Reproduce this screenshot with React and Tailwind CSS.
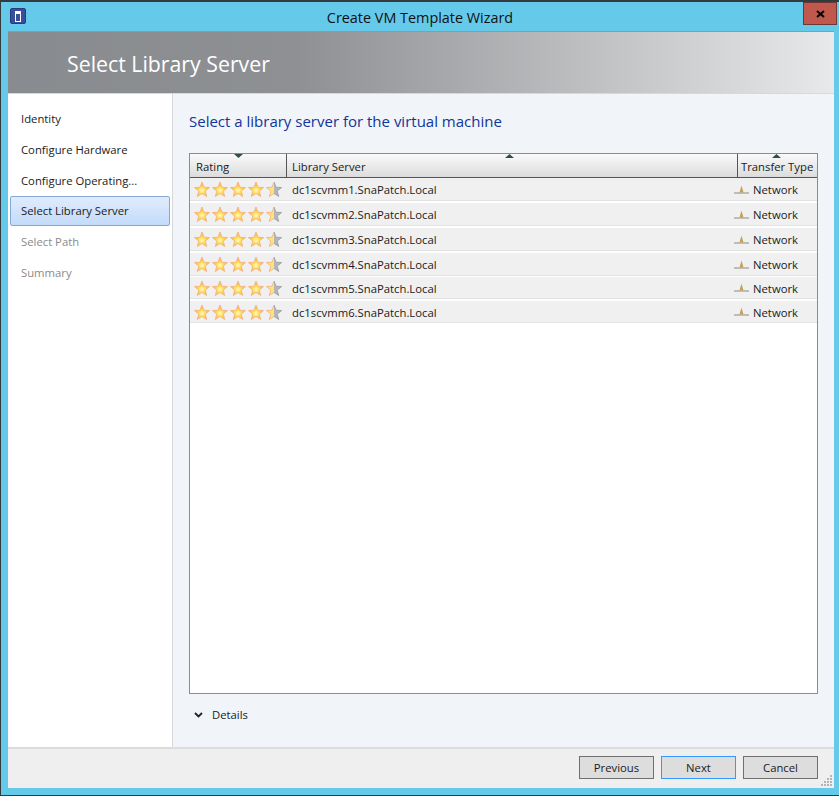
import React from "react";

const servers = [
  { name: "dc1scvmm1.SnaPatch.Local", row: "h-[23px] mb-[2px]" },
  { name: "dc1scvmm2.SnaPatch.Local", row: "h-[23px] mb-[2px]" },
  { name: "dc1scvmm3.SnaPatch.Local", row: "h-[23px] mb-[2px]" },
  { name: "dc1scvmm4.SnaPatch.Local", row: "h-[23px] mb-[1px]" },
  { name: "dc1scvmm5.SnaPatch.Local", row: "h-[22px] mb-[2px]" },
  { name: "dc1scvmm6.SnaPatch.Local", row: "h-[22px]" },
];

const Star = ({ half }) => (
  <svg width="18" height="17" viewBox="0 0 18 17" className="shrink-0">
    <defs>
      <radialGradient id="gold" cx="50%" cy="58%" r="50%">
        <stop offset="0%" stopColor="#fffbc8" />
        <stop offset="45%" stopColor="#ffdc50" />
        <stop offset="100%" stopColor="#fba92e" />
      </radialGradient>
      <linearGradient id="halfFill" x1="0" x2="1" y1="0" y2="0">
        <stop offset="50%" stopColor="#ffe27a" />
        <stop offset="50%" stopColor="#b4b6b9" />
      </linearGradient>
      <linearGradient id="halfLine" x1="0" x2="1" y1="0" y2="0">
        <stop offset="50%" stopColor="#f5b98a" />
        <stop offset="50%" stopColor="#a3a5a7" />
      </linearGradient>
    </defs>
    <path
      d="M9 1L11 6.25 16.6 6.53 12.23 10.05 13.7 15.47 9 12.4 4.3 15.47 5.77 10.05 1.4 6.53 7 6.25z"
      fill={half ? "url(#halfFill)" : "url(#gold)"}
      stroke={half ? "url(#halfLine)" : "#f5b98a"}
      strokeWidth="1"
      strokeLinejoin="round"
    />
  </svg>
);

const NetworkIcon = () => (
  <svg width="16" height="10" viewBox="0 0 16 10" className="shrink-0">
    <rect x="0" y="7" width="15" height="2" fill="#bdbdbd" />
    <path d="M7.5 0.5l2 7h-4z" fill="#c9a14c" />
  </svg>
);

const SortArrow = ({ down, className }) => (
  <svg width="9" height="4" viewBox="0 0 9 4" className={"absolute top-0 " + className}>
    <path d={down ? "M0 0h9L4.5 4z" : "M4.5 0L9 4H0z"} fill="#2f4f4f" />
  </svg>
);

const Row = ({ name, row }) => (
  <div className={"flex items-center bg-[#f0f0f0] border-b border-[#e3e3e3] pt-[1px] " + row}>
    <div className="flex w-[97px] shrink-0 pl-[3px]">
      <Star />
      <Star />
      <Star />
      <Star />
      <Star half />
    </div>
    <div className="mt-[2px] flex-1 pl-[5px] text-[#1a1a1a]">{name}</div>
    <div className="flex w-[83px] shrink-0 items-center gap-[3px] text-[#1a1a1a]">
      <NetworkIcon />
      <span className="mt-[2px]">Network</span>
    </div>
  </div>
);

const navItem = "flex h-[31px] items-center px-[11px]";

export default function App() {
  return (
    <div
      className="flex h-[796px] w-[839px] flex-col overflow-hidden border-t-2 border-b border-l border-[#333b40] bg-[#65c9ea] text-[11.3px]"
      style={{ fontFamily: '"Open Sans", "Noto Sans", sans-serif' }}
    >
      {/* Title bar */}
      <div className="relative flex h-[29px] shrink-0 items-start pl-[9px] pr-[2px]">
        <div className="mt-[6px] flex h-[16px] w-[16px] items-center justify-center rounded-[2px] border border-[#2a3a7c] bg-[#3a4f9c]">
          <div className="flex h-[11px] w-[6px] flex-col gap-[2px] border border-white">
            <div className="h-[2px] bg-white" />
          </div>
        </div>
        <div className="ml-[11px] flex-1 pt-[6px] text-center text-[14.4px] leading-[20px] text-[#111]">
          Create VM Template Wizard
        </div>
        <div className="flex h-[23px] w-[34px] items-center justify-center border border-[#6d3832] bg-[#c0584e]">
          <svg width="9" height="8" viewBox="0 0 9 8">
            <path d="M1 1l7 6M8 1L1 7" stroke="#000" strokeWidth="2" />
          </svg>
        </div>
      </div>

      <div className="ml-[7px] mr-[5px] flex h-[757px] flex-col bg-white">
        {/* Banner */}
        <div className="flex h-[62px] shrink-0 items-center border-t border-[#62a9c4] bg-gradient-to-r from-[#888b8f] via-[#8e9093] via-35% to-[#e8e9ea] pl-[59px] pt-[2px] text-[21.3px] text-white">
          Select Library Server
        </div>

        <div className="flex min-h-0 flex-1 border-t border-[#d6d8da]">
          {/* Steps */}
          <div className="flex w-[165px] shrink-0 flex-col border-r border-[#d6d8da] bg-white px-[2px] pt-[10px]">
            <div className={navItem + " text-[#1a1a1a]"}>Identity</div>
            <div className={navItem + " text-[#1a1a1a]"}>Configure Hardware</div>
            <div className={navItem + " text-[#1a1a1a]"}>Configure Operating...</div>
            <div className="-mt-[1px] flex h-[30px] items-center rounded-[2px] border border-[#84a9d6] bg-gradient-to-b from-[#e0ecfc] to-[#c3dbfb] px-[10px] pt-[1px] text-[#1a1a1a]">
              Select Library Server
            </div>
            <div className={navItem + " mt-[1px] text-[#8a8a8a]"}>Select Path</div>
            <div className={navItem + " text-[#8a8a8a]"}>Summary</div>
          </div>

          {/* Main panel */}
          <div className="flex min-w-0 flex-1 flex-col bg-[#f1f5f9] pl-[16px] pr-[16px]">
            <h1 className="pt-[16px] text-[15px] leading-[22px] text-[#12349a]">
              Select a library server for the virtual machine
            </h1>

            <div className="mt-[21px] flex h-[541px] flex-col border border-[#7292b2] bg-white">
              <div className="flex h-[24px] shrink-0 border-b border-[#555] bg-gradient-to-b from-[#fafafa] to-[#dcdcdc] text-[#1a1a1a]">
                <div className="relative flex w-[97px] shrink-0 items-end border-r border-[#555] pb-[1px] pl-[6px]">
                  Rating
                  <SortArrow down className="left-[44px]" />
                </div>
                <div className="relative flex flex-1 items-end border-r border-[#555] pb-[1px] pl-[5px]">
                  Library Server
                  <SortArrow className="left-[218px]" />
                </div>
                <div className="relative flex w-[79px] shrink-0 items-end pb-[1px] pl-[3px]">
                  Transfer Type
                  <SortArrow className="left-[34px]" />
                </div>
              </div>
              {servers.map((s) => (
                <Row key={s.name} name={s.name} row={s.row} />
              ))}
            </div>

            <div className="mt-[13px] flex items-center gap-[9px] pl-[5px] text-[#1a1a1a]">
              <svg width="9" height="6" viewBox="0 0 9 6">
                <path d="M1 1l3.5 3.5L8 1" fill="none" stroke="#222" strokeWidth="1.8" />
              </svg>
              Details
            </div>
          </div>
        </div>

        {/* Footer */}
        <div className="relative flex h-[41px] shrink-0 items-start justify-end gap-[7px] border-t-2 border-[#dcdcdc] bg-[#efefef] pr-[16px] pt-[7px] text-[#1a1a1a]">
          <button className="h-[23px] w-[75px] border border-[#707070] bg-[#dddddd] pt-[1px]">Previous</button>
          <button className="h-[23px] w-[75px] border border-[#3399ff] bg-[#dddddd] pt-[1px]">Next</button>
          <button className="h-[23px] w-[75px] border border-[#707070] bg-[#dddddd] pt-[1px]">Cancel</button>
          <svg width="12" height="12" viewBox="0 0 12 12" className="absolute bottom-[1px] right-[1px]">
            <g fill="#b4b4b4">
              <rect x="9" y="0" width="2" height="2" />
              <rect x="6" y="3" width="2" height="2" />
              <rect x="9" y="3" width="2" height="2" />
              <rect x="3" y="6" width="2" height="2" />
              <rect x="6" y="6" width="2" height="2" />
              <rect x="9" y="6" width="2" height="2" />
              <rect x="0" y="9" width="2" height="2" />
              <rect x="3" y="9" width="2" height="2" />
              <rect x="6" y="9" width="2" height="2" />
              <rect x="9" y="9" width="2" height="2" />
            </g>
          </svg>
        </div>
      </div>
    </div>
  );
}
